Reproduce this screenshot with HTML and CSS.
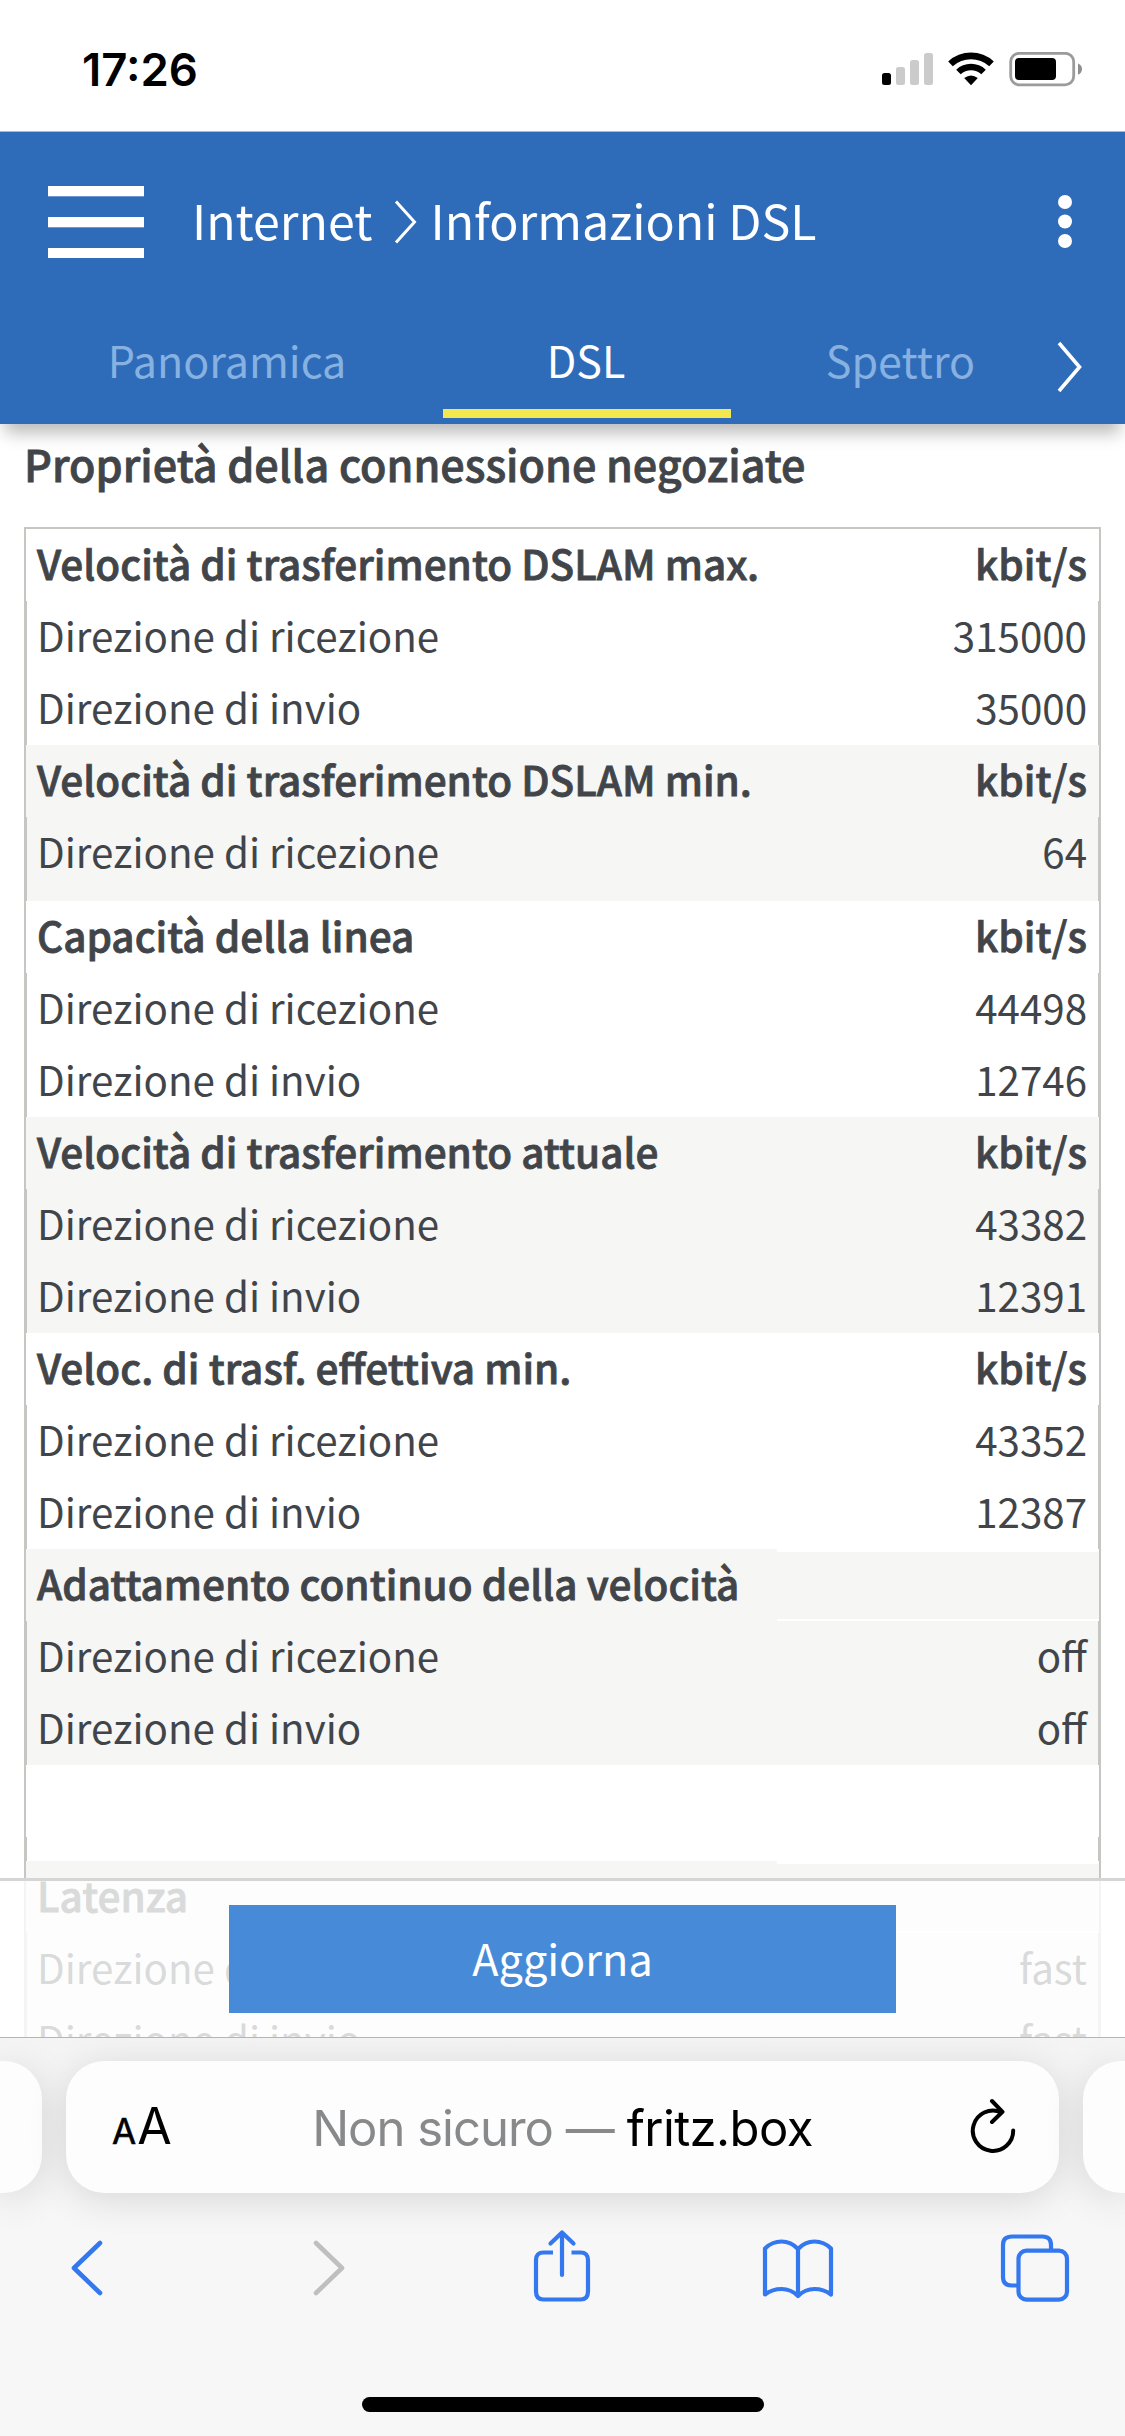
FILE: index.html
```html
<!DOCTYPE html>
<html lang="it">
<head>
<meta charset="utf-8">
<title>Informazioni DSL</title>
<link rel="stylesheet" href="styles.css">
</head>
<body>
<div class="phone">
  <div class="status">
    <span class="time">17:26</span>
    <svg class="status-icons" width="202" height="36" viewBox="0 0 202 36">
      <rect x="0" y="21" width="9" height="12" rx="2.5" fill="#000"/>
      <g fill="#cbcbcb">
        <rect x="14" y="15" width="9" height="18" rx="2.5"/>
        <rect x="28" y="8" width="9" height="25" rx="2.5"/>
        <rect x="42" y="1" width="9" height="32" rx="2.5"/>
      </g>
      <path d="M66.200 9.400A33.800 33.800 0 0 1 111.800 9.400L107.200 14.200A27 27 0 0 0 70.800 14.200Z" fill="#000"/>
      <path d="M74.200 17.700A21.600 21.600 0 0 1 103.800 17.700L99.300 22.300A15.200 15.200 0 0 0 78.700 22.300Z" fill="#000"/>
      <path d="M82.200 26Q89 20.800 95.800 26L89 33.200Z" fill="#000"/>
      <rect x="128.700" y="1.300" width="63" height="31.500" rx="8.500" fill="none" stroke="#9b9b9b" stroke-width="2.800"/>
      <rect x="133" y="6" width="41" height="22" rx="4" fill="#000"/>
      <path d="M196 11.500Q200 13 200 17T196 22.800Z" fill="#8e8e8e"/>
    </svg>
  </div>

  <header class="header">
    <div class="titlebar">
      <svg class="menu" width="96" height="72" viewBox="0 0 96 72" fill="#fff">
        <rect width="96" height="10.300"/><rect y="31" width="96" height="10.300"/><rect y="62" width="96" height="10"/>
      </svg>
      <span class="crumb">Internet</span>
      <svg class="crumb-arrow" width="24" height="44" viewBox="0 0 24 44" fill="none" stroke="#fff" stroke-width="3"><path d="M2 1.500L20.500 22L2 42.500"/></svg>
      <span class="crumb">Informazioni DSL</span>
      <svg class="dots" width="14" height="56" viewBox="0 0 14 56" fill="#fff"><circle cx="7" cy="8" r="7"/><circle cx="7" cy="27.500" r="7"/><circle cx="7" cy="47" r="7"/></svg>
    </div>
    <nav class="tabs">
      <span class="tab first">Panoramica</span>
      <span class="tab active">DSL</span>
      <span class="tab last">Spettro</span>
      <svg class="tabs-next" width="26" height="52" viewBox="0 0 26 52" fill="none" stroke="#fff" stroke-width="3.600"><path d="M2 2L22.500 26L2 50"/></svg>
    </nav>
  </header>

  <main class="content">
    <h1 class="heading">Proprietà della connessione negoziate</h1>
    <div class="table">
      <div class="row head"><span class="label">Velocità di trasferimento DSLAM max.</span><span class="value">kbit/s</span></div>
      <div class="row"><span class="label">Direzione di ricezione</span><span class="value">315000</span></div>
      <div class="row"><span class="label">Direzione di invio</span><span class="value">35000</span></div>

      <div class="row head alt"><span class="label">Velocità di trasferimento DSLAM min.</span><span class="value">kbit/s</span></div>
      <div class="row alt tall"><span class="label">Direzione di ricezione</span><span class="value">64</span></div>

      <div class="row head"><span class="label">Capacità della linea</span><span class="value">kbit/s</span></div>
      <div class="row"><span class="label">Direzione di ricezione</span><span class="value">44498</span></div>
      <div class="row"><span class="label">Direzione di invio</span><span class="value">12746</span></div>

      <div class="row head alt"><span class="label">Velocità di trasferimento attuale</span><span class="value">kbit/s</span></div>
      <div class="row alt"><span class="label">Direzione di ricezione</span><span class="value">43382</span></div>
      <div class="row alt"><span class="label">Direzione di invio</span><span class="value">12391</span></div>

      <div class="row head"><span class="label">Veloc. di trasf. effettiva min.</span><span class="value">kbit/s</span></div>
      <div class="row"><span class="label">Direzione di ricezione</span><span class="value">43352</span></div>
      <div class="row"><span class="label">Direzione di invio</span><span class="value">12387</span></div>

      <div class="row head alt"><span class="label">Adattamento continuo della velocità</span><span class="value empty"></span></div>
      <div class="row alt"><span class="label">Direzione di ricezione</span><span class="value">off</span></div>
      <div class="row alt"><span class="label">Direzione di invio</span><span class="value">off</span></div>

      <div class="row head"></div>
      <div class="row spacer"></div>

      <div class="row head alt"><span class="label">Latenza</span><span class="value empty"></span></div>
      <div class="row alt"><span class="label">Direzione di ricezione</span><span class="value">fast</span></div>
      <div class="row alt"><span class="label">Direzione di invio</span><span class="value">fast</span></div>
    </div>
    <div class="actions"><button class="refresh">Aggiorna</button></div>
  </main>

  <footer class="browser">
    <div class="pills">
      <div class="pill side left"></div>
      <div class="pill address">
        <span class="aa"><span class="aa-small">A</span><span class="aa-big">A</span></span>
        <span class="url"><span class="insecure">Non sicuro —</span><span class="host">fritz.box</span></span>
        <svg class="reload" width="48" height="58" viewBox="0 0 48 58" fill="none" stroke="#000" stroke-width="4" stroke-linecap="round" stroke-linejoin="round"><path d="M43.200 32.500A20.200 20.200 0 1 1 31 14.200M22 3L32.500 13.800L22 24"/></svg>
      </div>
      <div class="pill side right"></div>
    </div>
    <div class="toolbar">
      <svg class="back" width="34" height="76" viewBox="0 0 34 76" fill="none" stroke="#3478f0" stroke-width="4.600" stroke-linecap="round" stroke-linejoin="round"><path d="M30 14L4 39L30 64"/></svg>
      <svg class="forward" width="34" height="76" viewBox="0 0 34 76" fill="none" stroke="#bfbfbf" stroke-width="4.600" stroke-linecap="round" stroke-linejoin="round"><path d="M4 14L30 39L4 64"/></svg>
      <svg class="share" width="58" height="76" viewBox="0 0 58 76" fill="none" stroke="#3478f0" stroke-width="4.200" stroke-linecap="round" stroke-linejoin="round"><path d="M29 3.500V46M17.500 14.500L29 3.500L40.500 14.500"/><path stroke-linecap="butt" d="M20 23.500H10.500Q3 23.500 3 31V62.500Q3 70.500 10.500 70.500H47.500Q55 70.500 55 62.500V31Q55 23.500 47.500 23.500H38.500"/></svg>
      <svg class="book" width="74" height="76" viewBox="0 0 74 76" fill="none" stroke="#3478f0" stroke-width="4.200" stroke-linecap="round" stroke-linejoin="round"><path d="M37 20Q30 12.500 20.500 12.500Q11 12.500 4 19.500V65.500Q11.500 60 20.500 60Q30 60 37 67Q44 60 53.500 60Q62.500 60 70 65.500V19.500Q63 12.500 53.500 12.500Q44 12.500 37 20ZV67"/></svg>
      <svg class="tabs-icon" width="70" height="76" viewBox="0 0 70 76" fill="none" stroke="#3478f0" stroke-width="4.200" stroke-linejoin="round"><path d="M17.500 56.500H12Q3 56.500 3 48V16Q3 7.500 12 7.500H42.500Q51 7.500 51 16V21"/><rect x="18.500" y="21.700" width="48.500" height="49" rx="8"/></svg>
    </div>
    <div class="home"></div>
  </footer>
</div>
</body>
</html>
```
FILE: styles.css
```css
* { box-sizing: border-box; }

body {
  margin: 0;
  background: #fff;
  color: #414549;
  font-family: "Noto Sans CJK JP", "Noto Sans", sans-serif;
}

.phone {
  display: flex;
  flex-direction: column;
  width: 1125px;
  height: 2436px;
  overflow: hidden;
}

svg { display: block; flex: none; }

/* Status bar */
.status {
  display: flex;
  flex: none;
  justify-content: space-between;
  height: 132px;
  padding: 52px 41px 0 82px;
  border-bottom: 1px solid #b4b8be;
}

.time {
  color: #000;
  font: 600 45.5px/35px Inter, sans-serif;
}

/* Blue header */
.header {
  position: relative;
  z-index: 2;
  flex: none;
  height: 292px;
  background: #2e6bb9;
  color: #fff;
  box-shadow: 0 14px 16px -5px rgba(0, 0, 0, .27);
}

.titlebar {
  display: flex;
  align-items: center;
  height: 180px;
  padding: 0 53px 0 48px;
}

.menu { margin-right: 48px; }

.crumb {
  font-size: 48.3px;
  line-height: 60px;
  padding-bottom: 6px;
  white-space: nowrap;
}

.crumb-arrow { margin: 0 13px 0 21px; }

.dots { margin-left: auto; }

.tabs {
  display: flex;
  height: 106px;
}

.tab {
  width: 288px;
  height: 106px;
  padding-top: 22px;
  color: #86b1e0;
  font-size: 43px;
  line-height: 50px;
  text-align: center;
}

.tab.first { margin: 0 72px 0 83px; }

.tab.active {
  padding-right: 2px;
  color: #fff;
  border-bottom: 9px solid #f5e84e;
}

.tab.last {
  width: 169px;
  margin-left: 85px;
}

.tabs-next { margin: 29px 0 0 72px; }

/* Page content */
.content {
  position: relative;
  flex: 1;
  min-height: 0;
  padding: 0 24px;
  overflow: hidden;
}

.heading {
  margin: 0;
  height: 103px;
  padding-top: 9px;
  font-size: 43.1px;
  font-weight: 500;
  line-height: 60px;
  -webkit-text-stroke: .8px #414549;
}

.table {
  border: 2px solid #c6c6c2;
  font-size: 40.3px;
  line-height: 67px;
}

.row {
  display: flex;
  height: 72px;
  border: solid #c6c6c2;
  border-width: 0 1px;
}

.row.head {
  border-width: 0;
  font-size: 40.5px;
  font-weight: 500;
  -webkit-text-stroke: .8px #414549;
}

.row.tall { height: 84px; }
.row.spacer { height: 24px; }

.label {
  flex: none;
  width: 750px;
  padding-left: 10px;
  white-space: nowrap;
}

.value {
  flex: 1;
  padding-right: 11px;
  text-align: right;
}

.head .label { width: 751px; padding-left: 11px; }
.head .value { padding-right: 12px; }

.alt .label,
.alt .value { background: #f6f6f5; }

.value.empty { margin: 3px 0 2px; }

/* Action bar floating over the table */
.actions {
  position: absolute;
  right: 0;
  bottom: 0;
  left: 0;
  display: flex;
  justify-content: center;
  height: 159px;
  padding-top: 24px;
  border-top: 3px solid #d5d5d5;
  background: rgba(255, 255, 255, .8);
}

.refresh {
  width: 667px;
  height: 108px;
  padding: 0 0 4px;
  border: 0;
  background: #478bd8;
  color: #fff;
  font: 400 43.2px/60px "Noto Sans CJK JP", "Noto Sans", sans-serif;
}

/* Browser chrome */
.browser {
  flex: none;
  height: 399px;
  overflow: hidden;
  border-top: 1px solid #b5b5b5;
  background: linear-gradient(#f4f4f4, #f7f7f7 200px);
}

.pills {
  display: flex;
  gap: 24px;
  padding-top: 23px;
}

.pill {
  height: 132px;
  border-radius: 38px;
  background: #fdfdfd;
  box-shadow: 0 6px 38px rgba(0, 0, 0, .13);
}

.side { width: 42px; }
.left { border-radius: 0 38px 38px 0; }
.right { border-radius: 38px 0 0 38px; }

.address {
  display: flex;
  align-items: center;
  justify-content: space-between;
  width: 993px;
  padding: 0 41px 0 46px;
  color: #000;
  font-family: Inter, sans-serif;
}

.aa {
  display: flex;
  align-items: baseline;
  gap: 1px;
  width: 70px;
  padding-top: 2px;
  line-height: 60px;
}

.aa-small { font-size: 35px; -webkit-text-stroke: .6px #000; }
.aa-big { font-size: 50px; }

.url {
  display: flex;
  gap: 13px;
  margin-right: 27px;
  padding-top: 3px;
  font-size: 49px;
  line-height: 60px;
  letter-spacing: -1px;
  white-space: nowrap;
}

.insecure { color: #88898b; }
.host { letter-spacing: -.6px; }

.toolbar {
  display: flex;
  padding: 36px 0 0 70px;
}

.forward { margin-left: 208px; }
.share { margin-left: 187px; }
.book { margin-left: 170px; }
.tabs-icon { margin-left: 165px; }

.home {
  width: 402px;
  height: 15px;
  margin: 92px auto 0;
  border-radius: 8px;
  background: #000;
}
```
